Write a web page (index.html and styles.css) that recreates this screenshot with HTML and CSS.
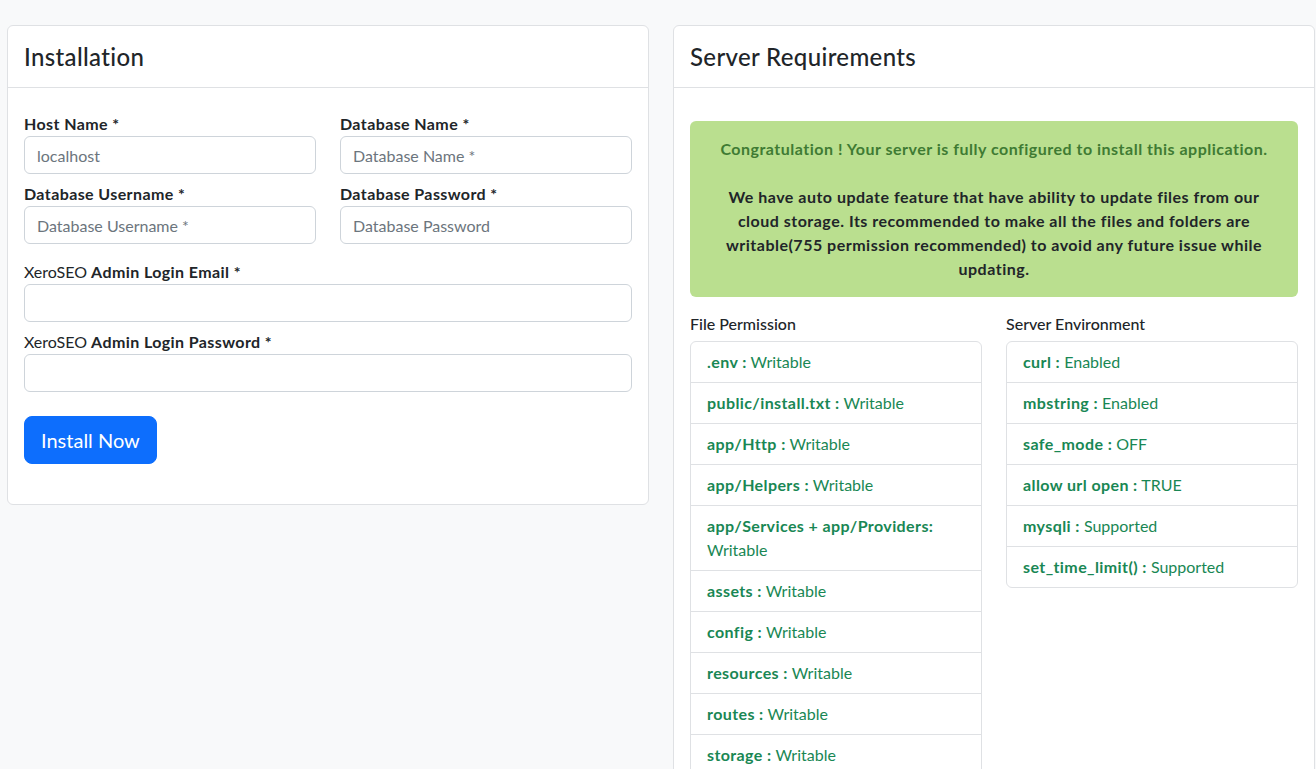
FILE: index.html
```html
<!DOCTYPE html>
<html lang="en">
<head>
<meta charset="utf-8">
<title>Installation</title>
<link rel="stylesheet" href="styles.css">
</head>
<body>
<div class="page">
  <section class="card">
    <div class="card-header"><h4>Installation</h4></div>
    <div class="card-body form-body">
      <div class="grid2">
        <div class="field">
          <label>Host Name *</label>
          <input class="input" type="text" placeholder="localhost">
        </div>
        <div class="field">
          <label>Database Name *</label>
          <input class="input" type="text" placeholder="Database Name *">
        </div>
        <div class="field">
          <label>Database Username *</label>
          <input class="input" type="text" placeholder="Database Username *">
        </div>
        <div class="field">
          <label>Database Password *</label>
          <input class="input" type="text" placeholder="Database Password">
        </div>
      </div>
      <div class="field wide">
        <label class="light">XeroSEO <b>Admin Login Email *</b></label>
        <input class="input" type="text">
      </div>
      <div class="field wide">
        <label class="light">XeroSEO <b>Admin Login Password *</b></label>
        <input class="input" type="text">
      </div>
      <button class="btn" type="button">Install Now</button>
    </div>
  </section>

  <section class="card">
    <div class="card-header"><h4>Server Requirements</h4></div>
    <div class="card-body req-body">
      <div class="alert">
        <span class="alert-first">Congratulation ! Your server is fully configured to install this application.</span><br><br>
        We have auto update feature that have ability to update files from our<br>
        cloud storage. Its recommended to make all the files and folders are<br>
        writable(755 permission recommended) to avoid any future issue while<br>
        updating.
      </div>
      <div class="req-cols">
        <div class="req-col">
          <div class="req-title">File Permission</div>
          <ul class="list">
            <li><b>.env :</b> Writable</li>
            <li><b>public/install.txt :</b> Writable</li>
            <li><b>app/Http :</b> Writable</li>
            <li><b>app/Helpers :</b> Writable</li>
            <li><b>app/Services + app/Providers:</b> Writable</li>
            <li><b>assets :</b> Writable</li>
            <li><b>config :</b> Writable</li>
            <li><b>resources :</b> Writable</li>
            <li><b>routes :</b> Writable</li>
            <li><b>storage :</b> Writable</li>
            <li><b>bootstrap/cache :</b> Writable</li>
          </ul>
        </div>
        <div class="req-col">
          <div class="req-title">Server Environment</div>
          <ul class="list">
            <li><b>curl :</b> Enabled</li>
            <li><b>mbstring :</b> Enabled</li>
            <li><b>safe_mode :</b> OFF</li>
            <li><b>allow url open :</b> TRUE</li>
            <li><b>mysqli :</b> Supported</li>
            <li><b>set_time_limit() :</b> Supported</li>
          </ul>
        </div>
      </div>
    </div>
  </section>
</div>
</body>
</html>
```

FILE: styles.css
```css
* { box-sizing: border-box; }
html, body { margin: 0; padding: 0; }
body {
  background: #f8f9fa;
  font-family: "Lato", "Open Sans", sans-serif;
  font-size: 16px;
  line-height: 24px;
  color: #212529;
}
.page {
  display: flex;
  align-items: flex-start;
  gap: 24px;
  padding: 25px 1px 0 7px;
}
.card {
  width: 642px;
  flex: 0 0 642px;
  background: #fff;
  border: 1px solid #dfe1e4;
  border-radius: 6px;
}
.card-header {
  padding: 16px 16px;
  border-bottom: 1px solid #dfe1e4;
}
.card-header h4 {
  margin: 0;
  font-size: 24px;
  line-height: 29px;
  font-weight: 500;
  letter-spacing: 0.35px;
  color: #212529;
}
.form-body { padding: 24px 16px 40px; }
.grid2 {
  display: grid;
  grid-template-columns: 1fr 1fr;
  column-gap: 24px;
  row-gap: 8px;
  margin-bottom: 16px;
}
.field { display: flex; flex-direction: column; }
.field.wide { margin-bottom: 8px; }
.field.wide + .btn { margin-top: 16px; }
label {
  font-weight: 700;
  line-height: 24px;
  letter-spacing: 0.4px;
}
label.light { font-weight: 400; letter-spacing: 0; }
label.light b { font-weight: 700; letter-spacing: 0.4px; }
.input {
  height: 38px;
  padding: 6px 12px;
  border: 1px solid #ced4da;
  border-radius: 6px;
  font: inherit;
  font-size: 16px;
  color: #212529;
  background: #fff;
  width: 100%;
}
.input::placeholder { color: #6c757d; }
.btn {
  display: inline-block;
  height: 48px;
  padding: 8px 16px;
  background: #0d6efd;
  color: #fff;
  border: 1px solid #0d6efd;
  border-radius: 8px;
  font: inherit;
  font-size: 20px;
  line-height: 30px;
}
.req-body { padding: 33px 16px 16px; }
.alert {
  background: #badf8f;
  border-radius: 6px;
  padding: 16px;
  text-align: center;
  font-weight: 700;
  letter-spacing: 0.5px;
  color: #212529;
  line-height: 24px;
}
.alert-first { color: #3f7b33; }
.req-cols {
  display: grid;
  grid-template-columns: 1fr 1fr;
  column-gap: 24px;
  margin-top: 15px;
}
.req-title {
  line-height: 24px;
  margin-bottom: 5px;
  font-weight: 500;
}
.list {
  list-style: none;
  margin: 0;
  padding: 0;
  border: 1px solid #dfe1e4;
  border-radius: 6px;
}
.list li {
  padding: 8px 16px;
  color: #198754;
  border-top: 1px solid #dfe1e4;
}
.list li:first-child { border-top: 0; }
.list li b { font-weight: 700; letter-spacing: 0.4px; }
```
